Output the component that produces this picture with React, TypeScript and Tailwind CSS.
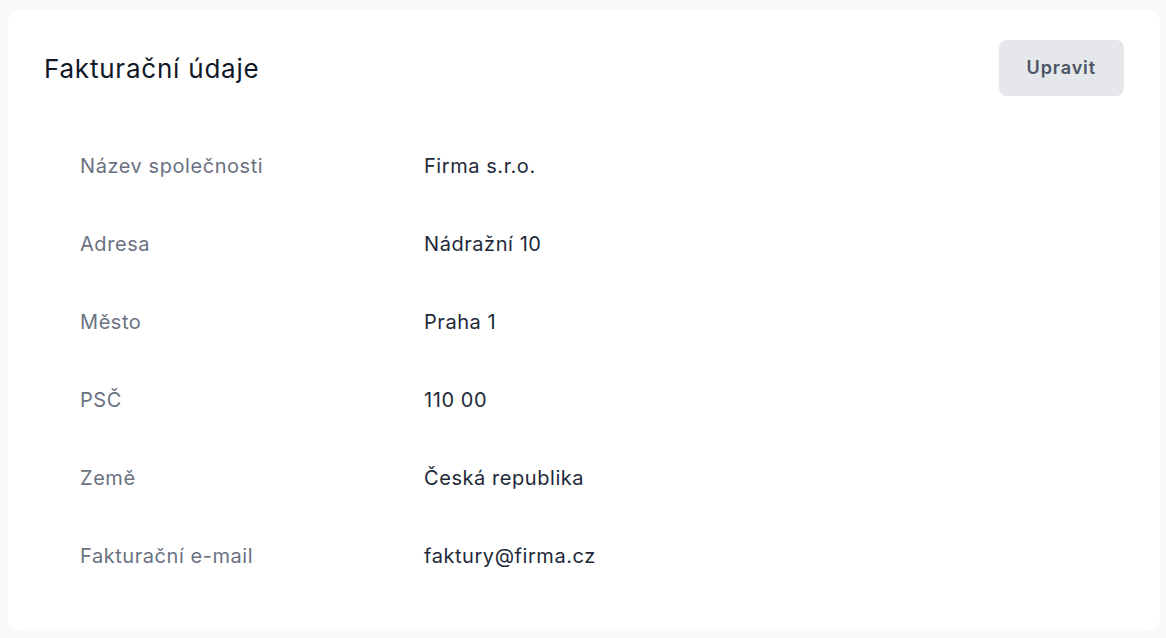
import React from "react";

interface Row {
  label: string;
  value: string;
}

const rows: Row[] = [
  { label: "Název společnosti", value: "Firma s.r.o." },
  { label: "Adresa", value: "Nádražní 10" },
  { label: "Město", value: "Praha 1" },
  { label: "PSČ", value: "110 00" },
  { label: "Země", value: "Česká republika" },
  { label: "Fakturační e-mail", value: "faktury@firma.cz" },
];

export default function App() {
  return (
    <div
      className="min-h-screen bg-[#f8f9fb] pl-2 pr-[6px] pt-[10px] pb-[7px]"
      style={{ fontFamily: "Inter, 'Noto Sans', sans-serif" }}
    >
      <div className="rounded-xl bg-white px-9 pt-[30px] pb-9">
        <div className="flex h-14 items-center justify-between">
          <h2 className="text-[26px] font-normal tracking-[0.03em] text-gray-900">Fakturační údaje</h2>
          <button className="flex h-14 items-center rounded-lg bg-gray-200 px-[28px] text-lg font-semibold tracking-[0.05em] text-gray-600">
            Upravit
          </button>
        </div>
        <dl className="mt-[31px] px-9">
          {rows.map((row) => (
            <div key={row.label} className="flex h-[78px] items-center text-[20px] tracking-[0.028em]">
              <dt className="w-[344px] text-gray-500">{row.label}</dt>
              <dd className="text-gray-800">{row.value}</dd>
            </div>
          ))}
        </dl>
      </div>
    </div>
  );
}
